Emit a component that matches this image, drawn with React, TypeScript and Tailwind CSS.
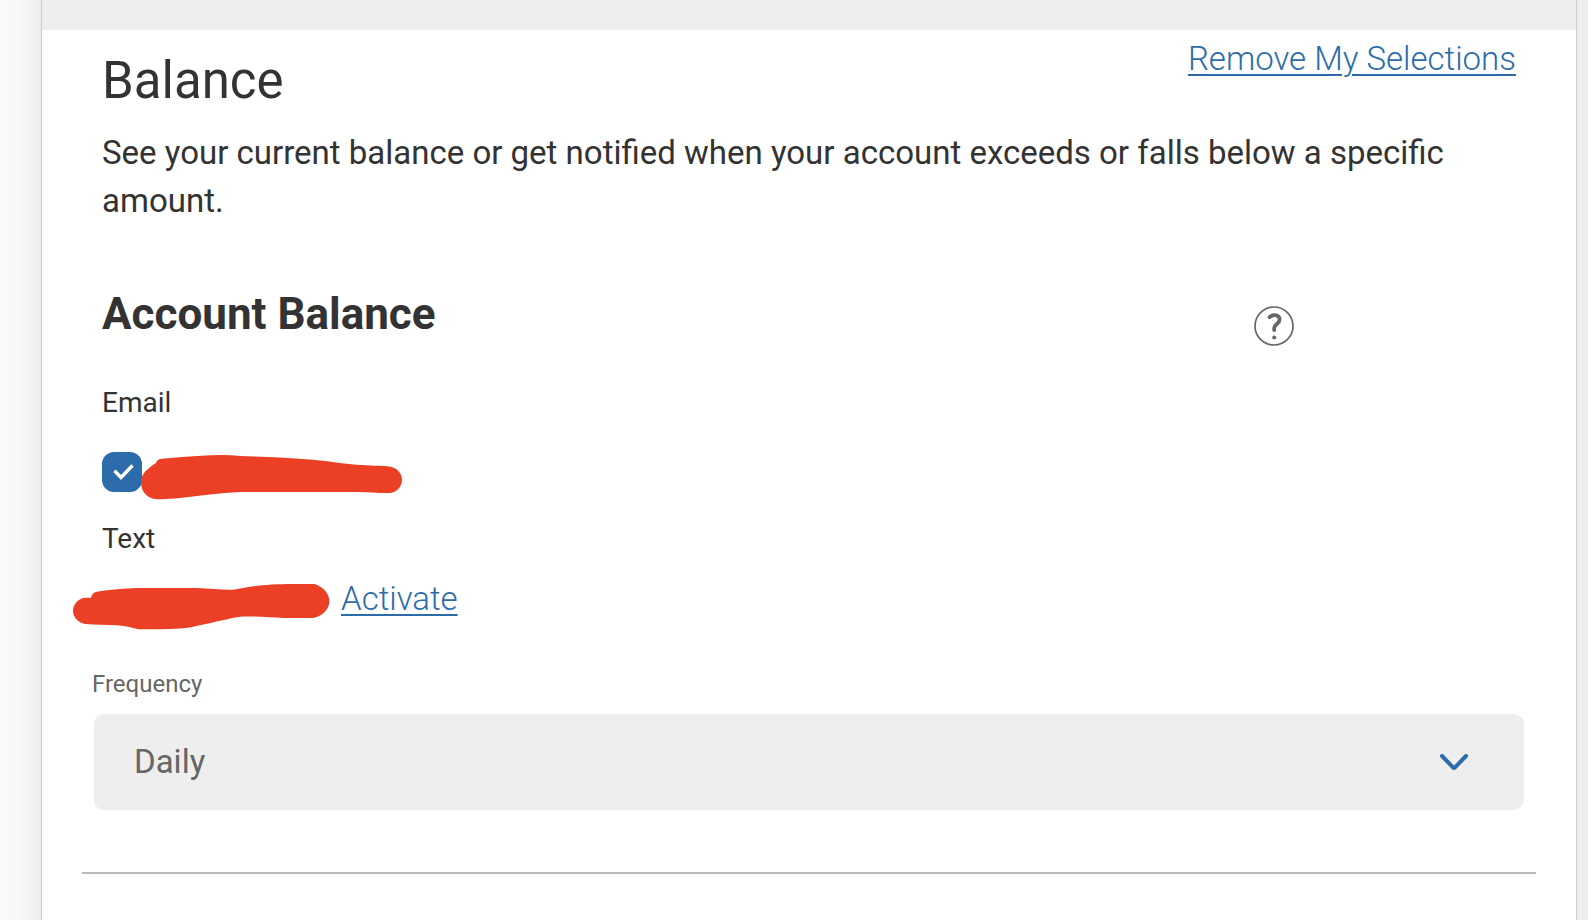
import { useState } from "react";

function EmailMark() {
  return (
    <svg className="h-[46px] w-[263px] shrink-0" viewBox="240 72 789 138" aria-hidden="true">
      <path
        fill="#eb4026"
        d="M288 99C290 91 296 87 305 86C350 82 400 79 450 76Q500 73 540 78C610 80 690 83 760 89C810 94 850 101 890 104C930 107 965 106 992 110C1012 114 1026 130 1026 149C1026 168 1012 187 990 189C960 190 930 186 890 186H540C480 188 420 198 360 204C330 207 300 209 280 206C258 201 243 182 243 156C243 132 262 116 288 99Z"
      />
    </svg>
  );
}

function PhoneMark() {
  return (
    <svg className="h-[47px] w-[258px] shrink-0" viewBox="36 459 774 141" aria-hidden="true">
      <path
        fill="#eb4026"
        d="M93 503C95 493 101 487 110 485C150 479 190 476 230 474H410C450 476 490 480 520 479C570 469 620 462 700 462H764C788 470 808 490 808 513C808 537 790 557 760 564H670C630 562 580 558 540 560C480 570 420 588 370 595C330 599 280 598 235 598C210 591 190 587 170 586C140 584 110 584 75 582C55 578 39 562 39 543C39 523 55 503 78 503Z"
      />
    </svg>
  );
}

function HelpIcon() {
  return (
    <svg className="size-10" viewBox="0 0 40 40" fill="none" stroke="#666" aria-hidden="true">
      <circle cx="20" cy="20" r="19" strokeWidth="1.7" />
      <path
        d="M15.6 11.2C17.2 9.6 19 9 20.6 9.1C23.6 9.3 25.6 11 25.6 13.4C25.6 17.6 20.2 18.2 20.2 22V24"
        strokeWidth="3.8"
        strokeLinecap="round"
      />
      <circle cx="20.2" cy="31.4" r="2" fill="#666" stroke="none" />
    </svg>
  );
}

export default function App() {
  const [emailOn, setEmailOn] = useState(true);

  return (
    <div className="flex min-h-screen bg-[#eee] font-['Roboto','Liberation_Sans',sans-serif] text-[#333]">
      <div className="w-[41px] shrink-0 bg-linear-to-r from-[#fbfbfb] via-[#f7f7f7] to-[#eee]" />
      <main className="mr-[11px] min-w-0 grow border-x border-[#ccc] bg-white">
        <div className="h-[30px] bg-[#eee]" />

        <section className="pt-1 pr-[60px] pl-[60px]">
          <header className="flex items-start justify-between">
            <h1 className="mt-[17px] text-[51px] leading-[60px]">Balance</h1>
            <a
              href="#remove"
              className="mt-px text-[33px] leading-[48px] font-light text-[#2c6cab] underline decoration-2 underline-offset-4"
            >
              Remove My Selections
            </a>
          </header>

          <p className="mt-[18px] text-[33px] leading-[48px]">
            See your current balance or get notified when your account exceeds or falls below a specific amount.
          </p>

          <div className="mt-[65px] flex items-start justify-between">
            <h2 className="text-[44px] leading-[48px] font-bold">Account Balance</h2>
            <button type="button" aria-label="Help" className="mt-4 mr-[222px]">
              <HelpIcon />
            </button>
          </div>

          <label htmlFor="email" className="mt-[37px] block w-fit text-[28px] leading-[40px]">
            Email
          </label>
          <div className="mt-[29px] flex items-start">
            <div className="grid shrink-0">
              <input
                id="email"
                type="checkbox"
                checked={emailOn}
                onChange={(e) => setEmailOn(e.target.checked)}
                className="peer col-start-1 row-start-1 size-10 appearance-none rounded-xl border-2 border-[#2c6cab] checked:bg-[#2c6cab]"
              />
              <svg
                className="pointer-events-none invisible col-start-1 row-start-1 size-10 peer-checked:visible"
                viewBox="0 0 40 40"
                fill="none"
                stroke="#fff"
                strokeWidth="3.4"
                aria-hidden="true"
              >
                <path d="M12.5 18.8L19 25.5L30.5 13.5" />
              </svg>
            </div>
            <div className="-ml-0.5 pt-0.5">
              <EmailMark />
            </div>
          </div>

          <h3 className="mt-[19px] text-[28px] leading-[40px]">Text</h3>
          <div className="mt-4 -ml-[30px] flex items-start gap-[11px]">
            <div className="pt-2">
              <PhoneMark />
            </div>
            <a
              href="#activate"
              className="text-[33px] leading-[48px] font-light text-[#2c6cab] underline decoration-2 underline-offset-4"
            >
              Activate
            </a>
          </div>
        </section>

        <div className="mt-[38px] pr-[52px] pl-[52px]">
          <label htmlFor="frequency" className="-ml-0.5 block w-fit text-[24px] leading-[32px] text-[#666]">
            Frequency
          </label>
          <div className="mt-[14px] grid items-center">
            <select
              id="frequency"
              defaultValue="Daily"
              className="col-start-1 row-start-1 h-24 w-full appearance-none rounded-[10px] bg-[#eee] pr-24 pl-10 text-[33px] text-[#666]"
            >
              <option>Daily</option>
            </select>
            <svg
              className="pointer-events-none col-start-1 row-start-1 mr-14 h-4 w-7 justify-self-end"
              viewBox="0 0 28 16"
              fill="none"
              stroke="#2c6cab"
              strokeWidth="4"
              strokeLinecap="round"
              strokeLinejoin="round"
              aria-hidden="true"
            >
              <path d="M2 2L13 13.4Q14 14.3 15 13.4L26 2" />
            </svg>
          </div>
        </div>

        <hr className="mx-10 mt-[62px] border-t-2 border-[#bbb]" />
      </main>
    </div>
  );
}
